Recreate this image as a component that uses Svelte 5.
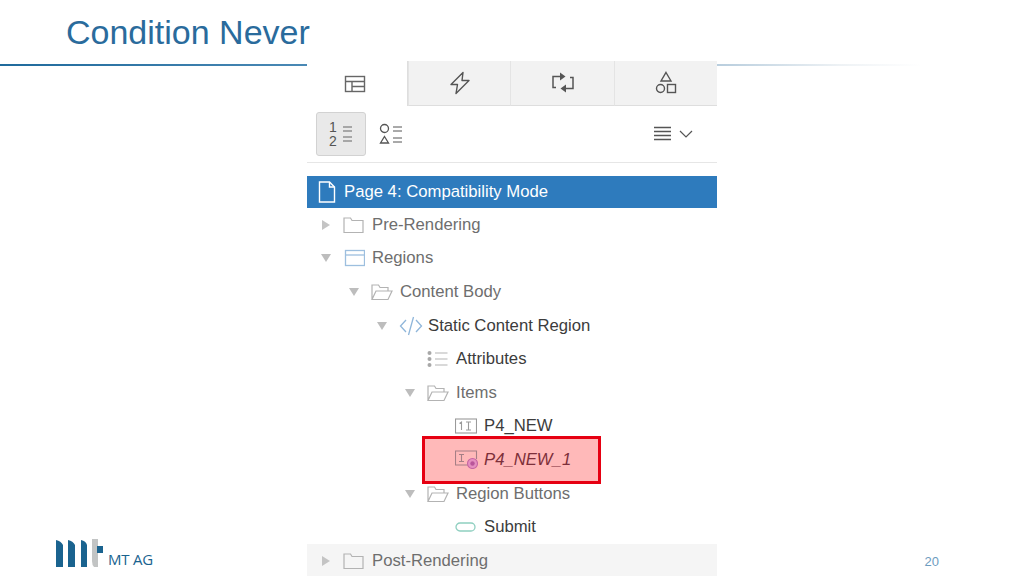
<script>
  const rows = [
    { level: 0, toggle: 'closed', icon: 'folder', label: 'Pre-Rendering' },
    { level: 0, toggle: 'open', icon: 'region', label: 'Regions' },
    { level: 1, toggle: 'open', icon: 'open', label: 'Content Body' },
    { level: 2, toggle: 'open', icon: 'code', label: 'Static Content Region', dark: true },
    { level: 3, icon: 'attrs', label: 'Attributes', dark: true },
    { level: 3, toggle: 'open', icon: 'open', label: 'Items' },
    { level: 4, icon: 'item', label: 'P4_NEW', dark: true },
    { level: 4, icon: 'cond', label: 'P4_NEW_1', flagged: true },
    { level: 3, toggle: 'open', icon: 'open', label: 'Region Buttons' },
    { level: 4, icon: 'button', label: 'Submit', dark: true },
    { level: 0, toggle: 'closed', icon: 'folder', label: 'Post-Rendering', shaded: true }
  ];
</script>

<div class="slide">
  <header class="title">
    <h1>Condition Never</h1>
    <div class="rule"></div>
  </header>

  <section class="panel">
    <div class="tabs">
      <div class="tab active">
        <svg width="22" height="20" viewBox="0 0 22 20" fill="none" stroke="#666" stroke-width="1.4">
          <rect x="1.5" y="2.5" width="19" height="15" />
          <path d="M1.5 7.5h19M8 7.5v10M8 12.5h12.5" />
        </svg>
      </div>
      <div class="tab">
        <svg width="22" height="24" viewBox="0 0 22 24" fill="none" stroke="#555" stroke-width="1.4" stroke-linejoin="round">
          <path d="M14 1.500 2 13.500h6.500L7 22.500 20 9.500h-7z" />
        </svg>
      </div>
      <div class="tab">
        <svg width="24" height="22" viewBox="0 0 24 22" fill="none" stroke="#555" stroke-width="1.5">
          <path d="M9 4.500H2v11h3M15 16.500h7v-11h-3" />
          <path d="M9 0.500l5.500 4-5.500 4z M15 12.500l-5.500 4 5.500 4z" fill="#555" stroke="none" />
        </svg>
      </div>
      <div class="tab">
        <svg width="22" height="24" viewBox="0 0 22 24" fill="none" stroke="#555" stroke-width="1.4">
          <path d="M11 1.500 16 10H6z" />
          <circle cx="5.500" cy="17.500" r="4" />
          <rect x="12.500" y="13.500" width="8" height="8" />
        </svg>
      </div>
    </div>

    <div class="toolbar">
      <button class="tool pressed" aria-label="Ordered list">
        <span class="nums">1<br />2</span>
        <svg width="11" height="22" viewBox="0 0 11 22" stroke="#666" stroke-width="1.2">
          <path d="M1 4h9M1 8h9M1 14h9M1 18h9" />
        </svg>
      </button>
      <button class="tool shapes" aria-label="Shapes list">
        <svg width="24" height="24" viewBox="0 0 24 24" fill="none" stroke="#555" stroke-width="1.3">
          <circle cx="5.500" cy="6.500" r="4" />
          <path d="M5.500 14.500 9.500 21h-8z" />
          <path d="M14 5h9M14 9h9M14 16h9M14 20h9" stroke-width="1" />
        </svg>
      </button>
      <div class="menu">
        <svg width="18" height="16" viewBox="0 0 18 16" stroke="#555" stroke-width="1.3">
          <path d="M0 1.500h17M0 5.500h17M0 9.500h17M0 13.500h17" />
        </svg>
        <svg width="14" height="8" viewBox="0 0 14 8" fill="none" stroke="#555" stroke-width="1.2">
          <path d="M1 1l6 6 6-6" />
        </svg>
      </div>
    </div>

    <div class="page-row">
      <svg width="18" height="22" viewBox="0 0 18 22" fill="none" stroke="#fff" stroke-width="1.4">
        <path d="M1.500 1h10l5 5v15h-15z" />
        <path d="M11.500 1v5h5" />
      </svg>
      <span>Page 4: Compatibility Mode</span>
    </div>

    <ul class="tree">
      {#each rows as row}
        <li class="row" class:shaded={row.shaded} style="padding-left: {row.level * 28}px">
          {#if row.flagged}<div class="flag"></div>{/if}
          <span class="toggle">
            {#if row.toggle === 'closed'}
              <svg width="8" height="10" viewBox="0 0 8 10"><path d="M0 0l8 5-8 5z" fill="#c4c4c4" /></svg>
            {:else if row.toggle === 'open'}
              <svg width="10" height="8" viewBox="0 0 10 8"><path d="M0 0h10L5 8z" fill="#bdbdbd" /></svg>
            {/if}
          </span>
          <span class="icon">
            {#if row.icon === 'folder'}
              <svg width="21" height="18" viewBox="0 0 21 18" fill="none" stroke="#b3b3b3" stroke-width="1.200">
                <path d="M1 16.500V2h6.500l1.500 2.500h11v12z" />
              </svg>
            {:else if row.icon === 'region'}
              <svg width="22" height="18" viewBox="0 0 22 18" fill="none" stroke="#9dbfdf" stroke-width="1.300">
                <rect x="2.500" y="1.500" width="19" height="15" />
                <path d="M2.500 6h19" />
              </svg>
            {:else if row.icon === 'open'}
              <svg width="22" height="18" viewBox="0 0 22 18" fill="none" stroke="#b3b3b3" stroke-width="1.200">
                <path d="M1 16.500V2h6.500L9 4.500h8V8M1 16.500h16L21 8H5z" />
              </svg>
            {:else if row.icon === 'code'}
              <svg width="24" height="20" viewBox="0 0 24 20" fill="none" stroke="#8fb6da" stroke-width="1.300">
                <path d="M7 4 1.500 10 7 16M17 4l5.500 6L17 16" />
                <path d="M14.500 1 9.500 19" />
              </svg>
            {:else if row.icon === 'attrs'}
              <svg width="21" height="18" viewBox="0 0 21 18" fill="none" stroke="#b3b3b3" stroke-width="1.100">
                <circle cx="2.500" cy="3" r="2" fill="#a8a8a8" stroke="none" />
                <circle cx="2.500" cy="9" r="2" fill="#a8a8a8" stroke="none" />
                <circle cx="2.500" cy="15" r="2" fill="#a8a8a8" stroke="none" />
                <path d="M8 3h12.500M8 9h12.500M8 15h12.500" />
              </svg>
            {:else if row.icon === 'item'}
              <svg width="22" height="16" viewBox="0 0 22 16" fill="none" stroke="#9a9a9a" stroke-width="1.100">
                <rect x="0.500" y="1" width="21" height="14" />
                <path d="M4.500 5.500 6.500 4v8M11 4h5M13.500 4v8M11 12h5" />
              </svg>
            {:else if row.icon === 'cond'}
              <svg width="23" height="19" viewBox="0 0 23 19" fill="none" stroke="#a57f86" stroke-width="1.100">
                <path d="M13 15H0.500V1h21v8" />
                <path d="M4 4.500h5M6.500 4.500v7M4 11.500h5" />
                <circle cx="17.500" cy="13.500" r="5" fill="#e58fc0" stroke="#c765a3" />
                <circle cx="17.500" cy="13.500" r="2.200" fill="#b9559a" stroke="none" />
              </svg>
            {:else if row.icon === 'button'}
              <svg width="21" height="10" viewBox="0 0 21 10" fill="none" stroke="#8fcfc0" stroke-width="1.300">
                <rect x="1" y="1" width="19" height="8" rx="4" />
              </svg>
            {/if}
          </span>
          <span class="label" class:dark={row.dark} class:flagged={row.flagged}>{row.label}</span>
        </li>
      {/each}
    </ul>
  </section>

  <footer class="foot">
    <div class="logo">
      <svg width="47" height="28" viewBox="0 0 47 28">
        <path d="M0 28V1q5 1 7 5v22zM12 28V1q5 1 7 5v22zM25 28V1q5 1 6 5v22z" fill="#1a638f" />
        <path d="M36 0h6v28h-4q-2-2-2-6z" fill="#c2c4c4" />
        <rect x="41" y="7" width="6" height="7" fill="#1a638f" />
      </svg>
      <span>MT AG</span>
    </div>
    <span class="pageno">20</span>
  </footer>
</div>

<style>
  :global(body) {
    margin: 0;
    background: #fff;
  }

  .slide {
    position: relative;
    width: 1024px;
    height: 576px;
    overflow: hidden;
    display: flex;
    flex-direction: column;
    font-family: "Liberation Sans", Arial, sans-serif;
  }

  .title h1 {
    margin: 0;
    padding: 13px 0 0 66px;
    height: 64px;
    box-sizing: border-box;
    font-size: 34px;
    line-height: 38px;
    font-weight: normal;
    color: #2a6b9c;
  }

  .rule {
    height: 2px;
    background: linear-gradient(90deg, #1f6a9c 0, #4a89b5 30%, #bcd0df 71%, #eef2f5 82%, #fff 90%);
  }

  /* the screenshot pasted over the slide */
  .panel {
    position: absolute;
    left: 307px;
    top: 61px;
    width: 410px;
    height: 515px;
    background: #fff;
    overflow: hidden;
  }

  .tabs {
    display: grid;
    grid-template-columns: 101px 102px 104px 103px;
    height: 45px;
  }

  .tab {
    display: flex;
    align-items: center;
    justify-content: center;
    background: #f2f2f2;
    border-left: 1px solid #e4e4e4;
    border-bottom: 1px solid #dedede;
  }

  .tab.active {
    background: #fff;
    border-left: none;
    border-right: 1px solid #dedede;
    border-bottom: none;
    padding-right: 4px;
  }

  .toolbar {
    height: 57px;
    box-sizing: border-box;
    border-bottom: 1px solid #e6e6e6;
    display: flex;
    align-items: center;
    padding: 0 24px 0 9px;
    gap: 13px;
  }

  .tool {
    height: 44px;
    padding: 0;
    border: none;
    background: none;
    display: flex;
    align-items: center;
    justify-content: center;
    gap: 5px;
  }

  .tool.pressed {
    width: 50px;
    background: #e9e9e9;
    border: 1px solid #d2d2d2;
    border-radius: 3px;
    box-sizing: border-box;
  }

  .tool.shapes {
    width: 24px;
  }

  .nums {
    font-size: 14px;
    line-height: 14px;
    color: #555;
  }

  .menu {
    margin-left: auto;
    display: flex;
    align-items: center;
    gap: 7px;
  }

  .page-row {
    margin-top: 13px;
    height: 32px;
    background: #2e7bbd;
    color: #fff;
    display: flex;
    align-items: center;
    gap: 8px;
    padding-left: 11px;
    font-size: 16.7px;
  }

  .tree {
    list-style: none;
    margin: 0;
    padding: 0;
  }

  .row {
    position: relative;
    height: 33.6px;
    display: flex;
    align-items: center;
    font-size: 16.7px;
  }

  .row.shaded {
    background: #f5f5f5;
  }

  .toggle {
    width: 14px;
    margin-left: 12px;
    display: flex;
    align-items: center;
    justify-content: center;
    flex: none;
  }

  .icon {
    position: relative;
    width: 29px;
    margin-left: 10px;
    display: flex;
    align-items: center;
    flex: none;
  }

  .label {
    position: relative;
    color: #6e6e6e;
  }

  .label.dark {
    color: #3c3c3c;
  }

  .label.flagged {
    color: #7d2f3a;
    font-style: italic;
  }

  .flag {
    position: absolute;
    left: 115px;
    top: -7px;
    width: 173px;
    height: 42px;
    border: 3px solid #e60012;
    background: #ffb9b9;
  }

  .foot {
    margin-top: auto;
    display: flex;
    justify-content: space-between;
    align-items: flex-end;
    padding: 0 85px 9px 56px;
  }

  .logo {
    display: flex;
    align-items: flex-end;
    gap: 5px;
    color: #1a638f;
    font-size: 15px;
    line-height: 15px;
  }

  .logo span {
    font-family: "Open Sans", sans-serif;
    letter-spacing: -0.2px;
  }

  .pageno {
    font-size: 13px;
    line-height: 14px;
    margin-bottom: -2px;
    color: #6d9cc0;
  }
</style>
